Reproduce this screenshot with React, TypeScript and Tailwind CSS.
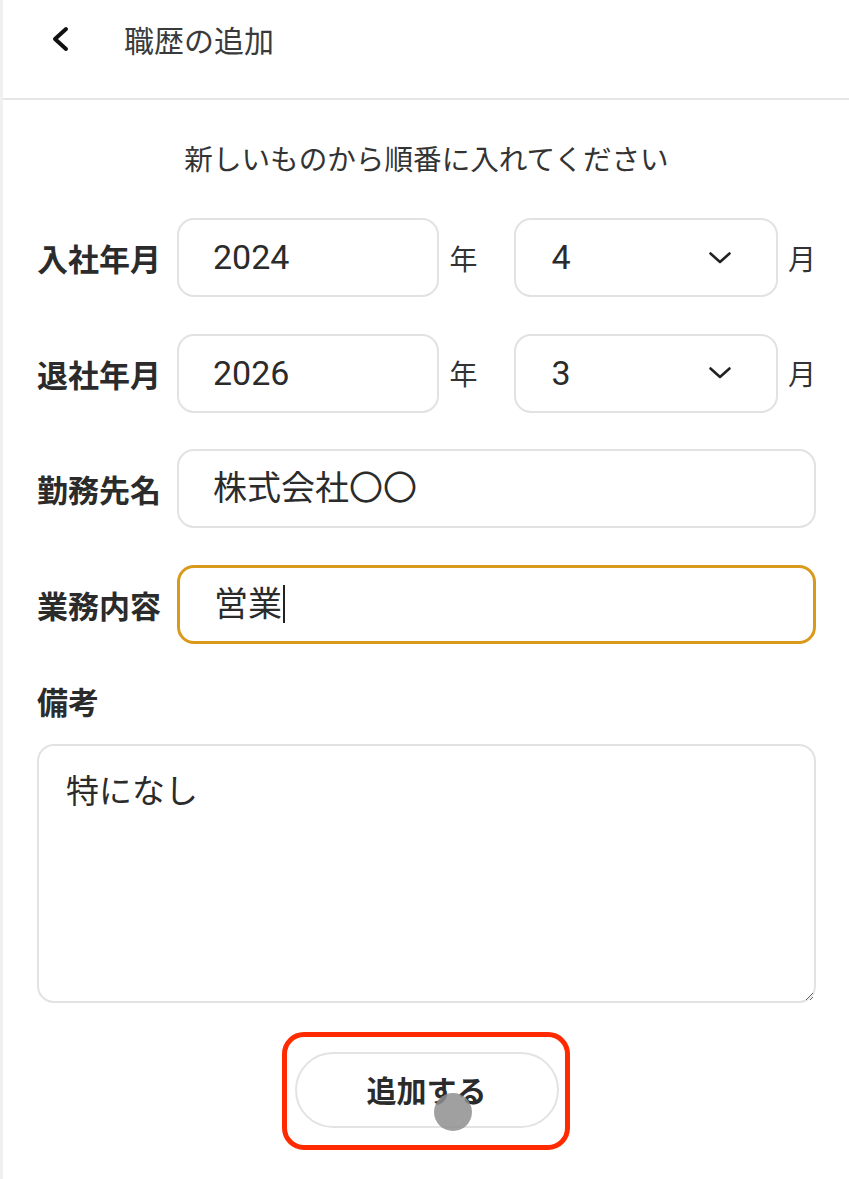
import React from "react";

const jp = "font-['Noto_Sans_CJK_JP',sans-serif]";
const field = "font-['Roboto','Noto_Sans_CJK_JP',sans-serif]";

function ChevronDown() {
  return (
    <svg width="24" height="14" viewBox="0 0 24 14" fill="none">
      <path d="M2.5 2.5 L12 11 L21.5 2.5" stroke="#222" strokeWidth="2.6" strokeLinecap="round" strokeLinejoin="round" />
    </svg>
  );
}

function ChevronLeft() {
  return (
    <svg width="20" height="26" viewBox="0 0 20 26" fill="none">
      <path d="M16 3 L5 13 L16 23" stroke="#111" strokeWidth="4" strokeLinecap="round" strokeLinejoin="round" />
    </svg>
  );
}

function Label({ children }: { children: React.ReactNode }) {
  return (
    <div className={`${jp} w-[140px] shrink-0 text-[31px] font-bold leading-none text-[#2b2b2b]`}>
      {children}
    </div>
  );
}

function Box({
  children,
  className = "",
  focused = false,
}: {
  children?: React.ReactNode;
  className?: string;
  focused?: boolean;
}) {
  const border = focused ? "border-[3px] border-[#d99a1c]" : "border-2 border-[#e2e2e2]";
  return (
    <div
      className={`${field} flex h-[79px] items-center rounded-[17px] ${border} bg-white pl-[34px] text-[34px] text-[#2b2b2b] ${className}`}
    >
      {children}
    </div>
  );
}

function DateRow({ label, year, month }: { label: string; year: string; month: string }) {
  return (
    <div className="flex items-center">
      <Label>{label}</Label>
      <Box className="w-[263px]">{year}</Box>
      <span className={`${jp} ml-[10px] w-[28px] text-[28px] text-[#333]`}>年</span>
      <Box className="ml-[37px] w-[264px] justify-between pr-[44px]">
        <span className="pl-[1px]">{month}</span>
        <ChevronDown />
      </Box>
      <span className={`${jp} ml-[10px] text-[28px] text-[#333]`}>月</span>
    </div>
  );
}

export default function App() {
  return (
    <div className="min-h-[1179px] w-[849px] border-l-[3px] border-[#f0f0f0] bg-white">
      <header className="flex h-[100px] items-start border-b-2 border-[#e6e6e6] pt-[19px]">
        <div className="flex h-[40px] items-center">
          <div className="ml-[47px] flex w-[74px]">
            <ChevronLeft />
          </div>
          <h1 className={`${jp} text-[30px] font-normal text-[#3a3a3a]`}>職歴の追加</h1>
        </div>
      </header>

      <main className="pl-[34px] pr-[33px]">
        <p className={`${jp} mt-[40px] text-center text-[28.6px] leading-[36px] text-[#333]`}>
          新しいものから順番に入れてください
        </p>

        <div className="mt-[42px] flex flex-col gap-[36.5px]">
          <DateRow label="入社年月" year="2024" month="4" />
          <DateRow label="退社年月" year="2026" month="3" />
          <div className="flex items-center">
            <Label>勤務先名</Label>
            <Box className={`${jp} flex-1`}>株式会社〇〇</Box>
          </div>
          <div className="flex items-center">
            <Label>業務内容</Label>
            <Box focused className={`${jp} flex-1`}>
              営業
              <span className="ml-[1px] inline-block h-[38px] w-[2px] bg-[#222]" />
            </Box>
          </div>
        </div>

        <div className={`${jp} mt-[37px] text-[31px] font-bold leading-[40px] text-[#2b2b2b]`}>備考</div>

        <textarea
          readOnly
          value="特になし"
          className={`${jp} mt-[23px] block h-[259px] w-full resize-y rounded-[17px] border-2 border-[#e2e2e2] bg-white px-[27px] pt-[21px] text-[33px] leading-[44px] text-[#2b2b2b] outline-none`}
        />

        <div className="relative mt-[49px] flex justify-center">
          <button
            className={`${jp} h-[76px] w-[264px] rounded-full border-2 border-[#e3e3e3] bg-white text-[30px] font-bold text-[#2b2b2b]`}
          >
            追加する
          </button>
          {/* tap annotation */}
          <div className="pointer-events-none absolute left-[245px] top-[-20px] h-[118px] w-[288px] rounded-[22px] border-[5px] border-[#ff2a00]" />
          <div className="pointer-events-none absolute left-[397px] top-[41px] h-[38px] w-[38px] rounded-full bg-[#8f8f8f]/85" />
        </div>
      </main>
    </div>
  );
}
